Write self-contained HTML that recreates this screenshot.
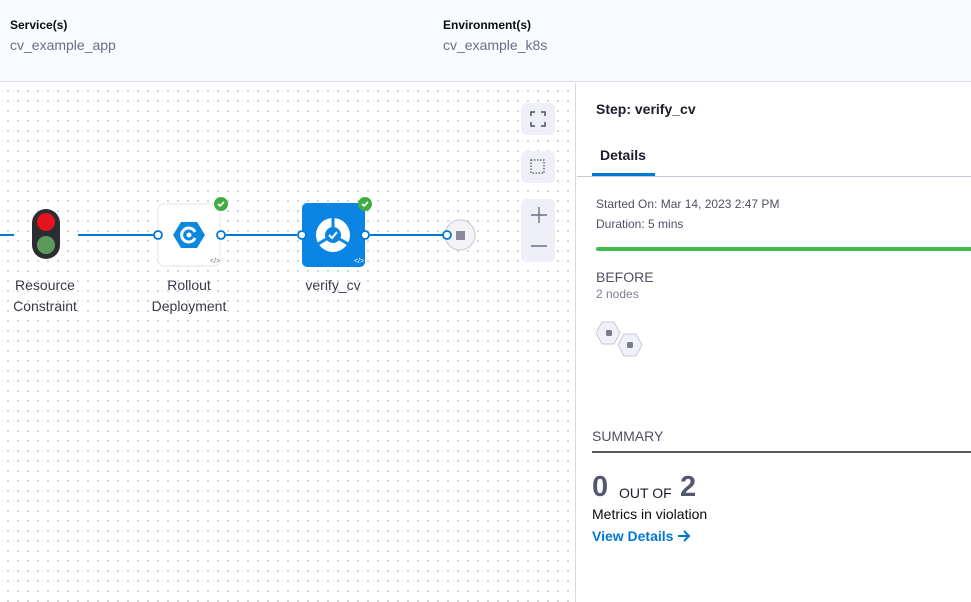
<!DOCTYPE html>
<html><head><style>
*{margin:0;padding:0;box-sizing:border-box}
body{width:971px;height:602px;overflow:hidden;font-family:"Liberation Sans",Arial,sans-serif;background:#fff;position:relative;color:#22222a}
.hdr{position:absolute;left:0;top:0;width:971px;height:82px;background:#f8fbff;border-bottom:1px solid #d9dae5}
.lbl{position:absolute;font-size:12px;font-weight:bold;color:#0b0b0d}
.val{position:absolute;font-size:14px;color:#6b6d85}
.canvas{position:absolute;left:0;top:83px;width:576px;height:519px;background-color:#fff;background-image:radial-gradient(circle,#c8c9d4 0.8px,transparent 1.1px);background-size:10px 10px;background-position:3px 3px;border-right:1px solid #d9dae5}
.ctl{position:absolute;left:521px;width:34px;background:#efeff7;border-radius:5px}
.panel{position:absolute;left:577px;top:83px;width:394px;height:519px}
.t{position:absolute;white-space:nowrap}
.nodelbl{position:absolute;font-size:14px;color:#383946;text-align:center;line-height:21px}
</style></head><body>
<div class="hdr">
<div class="lbl" style="left:10px;top:18px">Service(s)</div>
<div class="val" style="left:10px;top:37px">cv_example_app</div>
<div class="lbl" style="left:443px;top:18px">Environment(s)</div>
<div class="val" style="left:443px;top:37px">cv_example_k8s</div>
</div>
<div class="canvas"></div>
<svg style="position:absolute;left:0;top:180px" width="576" height="100">
<line x1="0" y1="55" x2="14" y2="55" stroke="#0278d5" stroke-width="2"/>
<line x1="78" y1="55" x2="154" y2="55" stroke="#0278d5" stroke-width="2"/>
<line x1="225" y1="55" x2="297" y2="55" stroke="#0278d5" stroke-width="2"/>
<line x1="369" y1="55" x2="444" y2="55" stroke="#0278d5" stroke-width="2"/>
<rect x="32" y="29" width="28" height="50" rx="14" fill="#2c2d33"/>
<circle cx="46" cy="42" r="9" fill="#e3141e"/>
<circle cx="46" cy="65" r="9" fill="#5c9a5c"/>
<rect x="158" y="24" width="62" height="62" rx="6" fill="#fff" stroke="#e6e6ee"/>
<polygon points="181,42 197,42 205,55 197,68 181,68 173,55" fill="#0a88e0"/>
<path d="M195 52 a7 7 0 1 0 0 6" fill="none" stroke="#fff" stroke-width="3"/>
<circle cx="189" cy="55" r="2.5" fill="#fff"/>
<text x="210" y="83" font-size="7" fill="#777">&lt;/&gt;</text>
<rect x="302" y="23" width="63" height="64" rx="5" fill="#0a85e3"/>
<circle cx="333" cy="55" r="17" fill="#fff"/>
<path d="M333 55 L333 37 M333 55 L318 64 M333 55 L348 64" stroke="#0a85e3" stroke-width="3"/>
<circle cx="333" cy="55" r="8" fill="#0a85e3"/>
<path d="M329 55 l3 3 l5 -6" fill="none" stroke="#fff" stroke-width="2"/>
<text x="354" y="83" font-size="7" fill="#fff">&lt;/&gt;</text>
<circle cx="221" cy="24" r="7" fill="#42ab45"/><path d="M218 24 l2 2 l4 -4" stroke="#fff" stroke-width="1.6" fill="none"/>
<circle cx="365" cy="24" r="7" fill="#42ab45"/><path d="M362 24 l2 2 l4 -4" stroke="#fff" stroke-width="1.6" fill="none"/>
<g fill="#fff" stroke="#0278d5" stroke-width="1.8">
<circle cx="158" cy="55" r="4"/><circle cx="221" cy="55" r="4"/><circle cx="302" cy="55" r="4"/><circle cx="365" cy="55" r="4"/>
</g>
<circle cx="460" cy="55" r="15" fill="#f3f3f8" stroke="#c5c6d2"/>
<rect x="456" y="51" width="9" height="9" fill="#8a8a9f"/>
<circle cx="447" cy="55" r="4" fill="#fff" stroke="#0278d5" stroke-width="1.8"/>
</svg>
<div class="nodelbl" style="left:0;top:275px;width:90px">Resource<br>Constraint</div>
<div class="nodelbl" style="left:139px;top:275px;width:100px">Rollout<br>Deployment</div>
<div class="nodelbl" style="left:290px;top:275px;width:86px">verify_cv</div>
<div class="ctl" style="top:103px;height:32px"><svg width="34" height="32"><path d="M10 13v-4h4M20 9h4v4M24 19v4h-4M14 23h-4v-4" fill="none" stroke="#4f5162" stroke-width="1.5"/></svg></div>
<div class="ctl" style="top:151px;height:32px"><svg width="34" height="32"><rect x="10" y="9" width="13" height="13" fill="none" stroke="#4f5162" stroke-width="1.2" stroke-dasharray="1.5 1.5"/></svg></div>
<div class="ctl" style="top:199px;height:63px"><svg width="34" height="63"><path d="M10 16h16M18 8v16M10 47h16" stroke="#6b6d85" stroke-width="1.4"/></svg></div>
<div class="panel">
<div class="t" style="left:19px;top:18px;font-size:14px;font-weight:bold;color:#1c1c28">Step: verify_cv</div>
<div class="t" style="left:23px;top:64px;font-size:14px;font-weight:bold;color:#1c1c28">Details</div>
<div style="position:absolute;left:15px;top:90px;width:63px;height:3px;background:#0278d5"></div>
<div style="position:absolute;left:0;top:93px;width:394px;height:1px;background:#c9cad6"></div>
<div class="t" style="left:19px;top:114px;font-size:12px;color:#4f5162">Started On: Mar 14, 2023 2:47 PM</div>
<div class="t" style="left:19px;top:134px;font-size:12px;color:#4f5162">Duration: 5 mins</div>
<div style="position:absolute;left:19px;top:164px;width:375px;height:4px;background:#42bb4c;border-radius:2px 0 0 2px"></div>
<div class="t" style="left:19px;top:186px;font-size:14px;color:#4f5162">BEFORE</div>
<div class="t" style="left:19px;top:204px;font-size:12px;color:#7d7f95">2 nodes</div>
<svg style="position:absolute;left:19px;top:237px" width="52" height="40"><g fill="#f0f0f8" stroke="#c9cad8"><polygon points="6,2 18,2 24,13 18,24 6,24 0,13"/><polygon points="28,14 40,14 46,25 40,36 28,36 22,25"/></g><rect x="10" y="10" width="6" height="6" rx="1.5" fill="#7a7b90"/><rect x="31" y="22" width="6" height="6" rx="1.5" fill="#7a7b90"/></svg>
<div class="t" style="left:15px;top:345px;font-size:14px;color:#4f5162">SUMMARY</div>
<div style="position:absolute;left:15px;top:368px;width:379px;height:2px;background:#5a5a62"></div>
<div class="t" style="left:15px;top:388px;font-size:29px;font-weight:bold;color:#555770">0</div>
<div class="t" style="left:42px;top:402px;font-size:14px;color:#1c1c28">OUT OF</div>
<div class="t" style="left:103px;top:388px;font-size:29px;font-weight:bold;color:#555770">2</div>
<div class="t" style="left:15px;top:423px;font-size:14px;color:#0b0b0d">Metrics in violation</div>
<div class="t" style="left:15px;top:445px;font-size:14px;font-weight:bold;color:#0278d5">View Details <svg width="14" height="12" style="vertical-align:-1px"><path d="M1 6h11M7 1l5 5-5 5" fill="none" stroke="#0278d5" stroke-width="2"/></svg></div>
</div>
</body></html>
